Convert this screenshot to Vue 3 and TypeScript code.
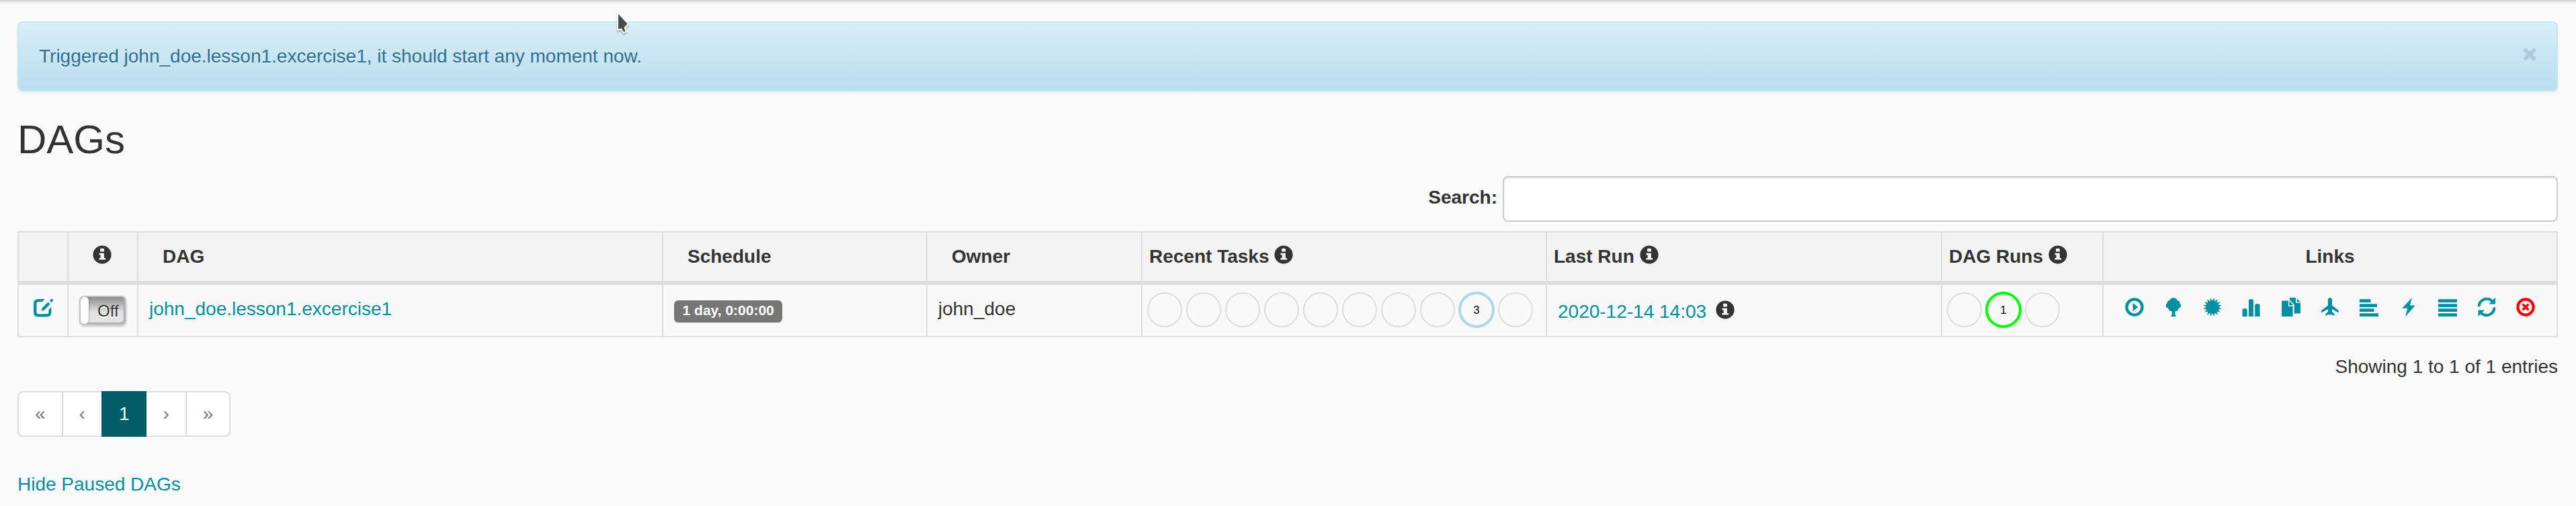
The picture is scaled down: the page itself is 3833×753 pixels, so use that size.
<script setup lang="ts">
interface LinkIcon {
  name: string
  d: string
  danger?: boolean
}

const recentTasks: { count: string; cls: string }[] = Array.from({ length: 10 }, (_, i) =>
  i === 8 ? { count: '3', cls: 'scheduled' } : { count: '', cls: '' }
)
const dagRuns: { count: string; cls: string }[] = [
  { count: '', cls: '' },
  { count: '1', cls: 'running' },
  { count: '', cls: '' }
]

const infoPath =
  'M14 .4a13.6 13.6 0 1 0 0 27.2a13.6 13.6 0 1 0 0-27.2zM11.7 4.7h4.6q.6 0 .6.6v3.6q0 .6-.6.6h-4.6q-.6 0-.6-.6V5.300q0-.6.6-.6zM9.900 11.700h6.400q.6 0 .6.6v6.800h1.700q.6 0 .6.6v1.300q0 .6-.6.6H9.900q-.6 0-.6-.6v-1.300q0-.6.6-.6h1.700v-4.900H9.900q-.6 0-.6-.6v-1.300q0-.6.6-.6z'

function burst(): string {
  const pts: string[] = []
  for (let i = 0; i < 32; i++) {
    const r = i % 2 === 0 ? 14 : 9.2
    const a = (Math.PI * (i + 1)) / 16
    pts.push(`${(14 + r * Math.sin(a)).toFixed(2)} ${(14 - r * Math.cos(a)).toFixed(2)}`)
  }
  return `M${pts.join('L')}z`
}

const linkIcons: LinkIcon[] = [
  { name: 'Trigger', d: 'M14 .3a13.7 13.7 0 1 0 0 27.400a13.700 13.700 0 1 0 0-27.400zM14 4.600a9.400 9.400 0 1 1 0 18.800a9.400 9.400 0 1 1 0-18.800zM11.600 8.800q0-.8.7-.3l6.300 5q.6.500 0 1l-6.300 5q-.7.5-.7-.3z' },
  { name: 'Tree', d: 'M14 .2c2.800 0 5 1.600 5.700 3.900c2.500.2 4 2 3.700 4.200c1.200.8 1.900 2 1.900 3.400c0 2.300-1.600 3.700-3.500 3.900c-.2 2.600-2 4.500-4.400 4.500h-.9v5.600h.6q.5 0 .5.5v1.700H10.600v-1.700q0-.5.500-.5h.6v-5.600h-1c-2.400 0-4.200-1.900-4.400-4.500c-2-.2-3.600-1.700-3.600-3.900c0-1.400.8-2.700 2-3.400c-.3-2.200 1.200-4 3.600-4.200C9 1.800 11.200.2 14 .2z' },
  { name: 'Graph', d: burst() },
  { name: 'Duration', d: 'M.6 27.900v-9.600q0-2 2-2h3.200q2 0 2 2v9.600zM10 27.900V4.200q0-2 2-2h3q2 0 2 2v23.700zM19.200 27.900V11.200q0-2 2-2h3.400q2 0 2 2v16.700z' },
  { name: 'Tries', d: 'M.1 5.400q0-1 1-1H10v8.700h6.600v13.800q0 1-1 1H1.100q-1 0-1-1zM11.400 4.700l5.200 5.500v1.300h-5.200zM11.900 0H21v7.800h7.500v14.800q0 1-1 1h-8.800V10.300L11.900 3.300zM22.800 1.300l5.100 5.200h-5.100z' },
  { name: 'Landing', d: 'M14 .1c2 0 3.100 1.700 3.100 3.900v7.400l9 7.100q.8.600.8 1.500v1.500q0 1-.9.500L17.100 17v4.100l3 2.700q.5.4.5 1.100v1.500q0 .8-.7.400L15.500 24.400Q14.900 26 14 26.100Q13.100 26 12.500 24.400L8.100 26.800q-.7.400-.7-.4v-1.500q0-.7.500-1.100l3-2.700V17L2 22q-.9.500-.9-.5V20q0-.9.800-1.500l9-7.100V4C10.900 1.800 12 .1 14 .1z' },
  { name: 'Gantt', d: 'M.8 2.200h15q.8 0 .8.800v3.200q0 .8-.8.800h-15q-.8 0-.8-.8V3q0-.8.800-.8zM.8 9.300h24.400q.8 0 .8.800v3.200q0 .8-.8.800H.8q-.8 0-.8-.8v-3.200q0-.8.800-.8zM.8 16.300h20q.8 0 .8.800v3.200q0 .8-.8.800H.8q-.8 0-.8-.8v-3.200q0-.8.800-.8zM.8 23.300h26.600q.8 0 .8.800v3q0 .8-.8.800H.8q-.8 0-.8-.8v-3q0-.8.800-.8z' },
  { name: 'Code', d: 'M18.400.5q.5-.6.300.2L15.900 11.600h7q.9 0 .3.700L9.700 27.400q-.6.500-.4-.2l3-11.500H5.200q-.8 0-.3-.700z' },
  { name: 'Logs', d: 'M.8 2.200h26.600q.8 0 .8.800v3.200q0 .8-.8.800H.8Q0 7 0 6.200V3q0-.8.800-.8zM.8 9.300h26.600q.8 0 .8.800v3.200q0 .8-.8.800H.8q-.8 0-.8-.8v-3.200q0-.8.800-.8zM.8 16.300h26.600q.8 0 .8.800v3.200q0 .8-.8.800H.8q-.8 0-.8-.8v-3.200q0-.8.800-.8zM.8 23.300h26.600q.8 0 .8.800v3q0 .8-.8.800H.8q-.8 0-.8-.8v-3q0-.8.800-.8z' },
  { name: 'Refresh', d: 'M.6 13.300A13.500 13.500 0 0 1 23.300 3.400L26.500.3q.6-.5.600.3v8q0 .8-.8.800h-8.200q-.8 0-.3-.6l2.700-2.600A9.800 9.800 0 0 0 4.400 13.300zM27.400 14.500A13.500 13.500 0 0 1 4.800 24.500L2.100 27.300q-.6.500-.6-.3V19.200q0-.8.800-.8h7.900q.8 0 .3.600L7.600 21.800A9.800 9.800 0 0 0 23.600 14.500z' },
  { name: 'Delete', danger: true, d: 'M14 .3a13.700 13.700 0 1 0 0 27.400a13.700 13.700 0 1 0 0-27.400zM14 4.400a9.600 9.600 0 1 1 0 19.200a9.600 9.600 0 1 1 0-19.200zM10.700 8.500L14 11.400l3.300-2.900 2.200 2.200L16.600 14l2.900 3.300-2.200 2.200L14 16.600l-3.300 2.900-2.200-2.200L11.400 14l-2.900-3.300z' }
]
const pages: string[] = ['«', '‹', '1', '›', '»']
</script>

<template>
  <div class="page">
    <div class="alert">
      <span>Triggered john_doe.lesson1.excercise1, it should start any moment now.</span>
      <svg class="close" viewBox="0 0 20 20"><path d="M4.200.2L10 6.200 15.800.2l4 4L13.800 10l6 5.800-4 4L10 13.800l-5.800 6-4-4L6.200 10 .2 4.200z" /></svg>
    </div>

    <h2>DAGs</h2>

    <div class="search">
      <label for="dag-search">Search:</label>
      <input id="dag-search" type="text" />
    </div>

    <div class="table">
      <div class="row head">
        <div class="cell"></div>
        <div class="cell center"><svg class="icon" viewBox="0 0 28 28"><path fill-rule="evenodd" :d="infoPath" /></svg></div>
        <div class="cell sortable">DAG</div>
        <div class="cell sortable">Schedule</div>
        <div class="cell sortable">Owner</div>
        <div class="cell">Recent Tasks<svg class="icon after" viewBox="0 0 28 28"><path fill-rule="evenodd" :d="infoPath" /></svg></div>
        <div class="cell">Last Run<svg class="icon after" viewBox="0 0 28 28"><path fill-rule="evenodd" :d="infoPath" /></svg></div>
        <div class="cell">DAG Runs<svg class="icon after" viewBox="0 0 28 28"><path fill-rule="evenodd" :d="infoPath" /></svg></div>
        <div class="cell center">Links</div>
      </div>
      <div class="row body">
        <div class="cell edit">
          <svg class="icon teal" viewBox="0 0 30 28">
            <path d="M16.500.9L13 4.900H7.800Q4.400 4.900 4.400 8.300V19.900Q4.400 23.300 7.800 23.300H19Q22.400 23.300 22.400 19.900V17L26.400 13V20.500Q26.400 27.500 19.400 27.500H7Q0 27.500 0 20.500V7.900Q0 .9 7 .9z" />
            <path d="M21.500 5.400l3.200 3.200-8.600 8.600-4.600 1.600 1.500-4.900zM26.300.7q.6-.6 1.200 0l1.500 1.500q.6.600 0 1.200l-2.400 2.500-2.700-2.700z" />
          </svg>
        </div>
        <div class="cell toggle-cell">
          <div class="toggle"><span class="knob"></span><span class="off">Off</span></div>
        </div>
        <div class="cell"><a>john_doe.lesson1.excercise1</a></div>
        <div class="cell"><span class="badge">1 day, 0:00:00</span></div>
        <div class="cell">john_doe</div>
        <div class="cell states">
          <span v-for="(s, i) in recentTasks" :key="i" class="state" :class="s.cls">{{ s.count }}</span>
        </div>
        <div class="cell lastrun"><a>2020-12-14 14:03</a><svg class="icon" viewBox="0 0 28 28"><path fill-rule="evenodd" :d="infoPath" /></svg></div>
        <div class="cell states">
          <span v-for="(s, i) in dagRuns" :key="i" class="state" :class="s.cls">{{ s.count }}</span>
        </div>
        <div class="cell links">
          <svg v-for="l in linkIcons" :key="l.name" class="icon" :class="l.danger ? 'red' : 'teal'" viewBox="0 0 28 28">
            <path fill-rule="evenodd" :d="l.d" />
          </svg>
        </div>
      </div>
    </div>

    <div class="info">Showing 1 to 1 of 1 entries</div>

    <div class="pagination">
      <span v-for="p in pages" :key="p" class="pg" :class="{ active: p === '1' }">{{ p }}</span>
    </div>

    <div class="foot"><a>Hide Paused DAGs</a></div>

    <svg class="cursor" viewBox="0 0 24 36">
      <path d="M3 2v26.500l5.300-1.200 3.600 5.700 3.600-2-1.800-6 5.300-5.400z" />
    </svg>
  </div>
</template>

<style>
html,
body {
  margin: 0;
  background: #fafafa;
}
</style>

<style scoped>
.page {
  box-sizing: border-box;
  width: 3833px;
  height: 753px;
  padding: 32px 27px 0 26px;
  overflow: hidden;
  position: relative;
  background: linear-gradient(#cfcfcf 0, #dedede 2px, #f3f3f3 4px, #fafafa 7px);
  color: #333;
  font: 28px/40px "Liberation Sans", Arial, sans-serif;
}
.page * {
  box-sizing: border-box;
}
.alert {
  display: flex;
  justify-content: space-between;
  height: 104px;
  padding: 30px;
  border: 2px solid #bce8f1;
  border-radius: 8px;
  background: linear-gradient(#d9edf7, #b9def0);
  box-shadow: inset 0 2px 0 rgba(255, 255, 255, 0.25), 0 2px 4px rgba(0, 0, 0, 0.05);
  color: #31708f;
  text-shadow: 0 2px 0 rgba(255, 255, 255, 0.2);
}
.close {
  width: 20px;
  height: 20px;
  margin: 7px 0 0;
  fill: #abcbdc;
}
h2 {
  margin: 39px 0 0;
  height: 66px;
  font-size: 60px;
  line-height: 66px;
  font-weight: 400;
}
.search {
  display: flex;
  justify-content: flex-end;
  margin-top: 21px;
  font-weight: 700;
}
.search label {
  margin: 12px 8px 0 0;
}
.search input {
  width: 1570px;
  height: 68px;
  border: 2px solid #ccc;
  border-radius: 8px;
  background: #fff;
  box-shadow: inset 0 2px 2px rgba(0, 0, 0, 0.075);
}
.table {
  margin-top: 14px;
  border: 2px solid #ddd;
  border-left: 0;
}
.row {
  display: grid;
  grid-template-columns: 74px 104px 781px 393px 320px 602px 588px 240px 676px;
}
.head {
  height: 78px;
  border-bottom: 6px solid #ddd;
  background: #f3f3f3;
  font-weight: 700;
}
.body {
  height: 76px;
  background: #f9f9f9;
}
.cell {
  display: flex;
  align-items: flex-start;
  padding: 16px 10px 0;
  border-left: 2px solid #ddd;
  white-space: nowrap;
}
.body .cell {
  padding: 16px 16px 0;
}
.head .sortable {
  padding-left: 36px;
}
.center {
  justify-content: center;
}
.center:nth-child(2) {
  padding-right: 12px;
}
.icon {
  flex: none;
  width: 28px;
  height: 28px;
  fill: #333;
}
.head .icon {
  margin-top: 3px;
}
.icon.after {
  margin-left: 8px;
}
.icon.teal {
  fill: #0090a2;
}
.icon.red {
  fill: #f00;
}
a {
  color: #0090a2;
}
.body .edit {
  padding: 20px 0 0 22px;
}
.edit .icon {
  width: 30px;
}
.body .toggle-cell {
  padding: 16px 0 0 16px;
}
.toggle {
  display: flex;
  width: 70px;
  height: 44px;
  border: 2px solid #c4c4c4;
  border-radius: 7px;
  overflow: hidden;
  background: linear-gradient(#8b8b8b, #e2e2e2 55%, #e6e6e6);
  box-shadow: inset -2px -2px 2px #aaa, 0 2px 3px rgba(0, 0, 0, 0.2);
}
.knob {
  width: 12px;
  height: 40px;
  border-radius: 5px;
  background: #fff;
  box-shadow: 1px 0 2px rgba(0, 0, 0, 0.25);
}
.off {
  margin: 4px 0 0 13px;
  font-size: 24px;
  line-height: 34px;
  text-shadow: 0 2px 0 #fff;
}
.badge {
  height: 33px;
  margin-top: 7px;
  padding: 0 12.6px;
  border-radius: 6px;
  background: #777;
  color: #fff;
  font-size: 21px;
  font-weight: 700;
  line-height: 30px;
}
.body .states {
  gap: 6px;
  padding: 11px 0 0 7px;
}
.state {
  flex: none;
  width: 52px;
  height: 52px;
  border: 2px solid #ddd;
  border-radius: 50%;
  color: #000;
  font-size: 16px;
  line-height: 48px;
  text-align: center;
}
.state.scheduled,
.state.running {
  width: 54px;
  height: 54px;
  margin: -1px;
  border: 4px solid #add8e6;
  line-height: 47px;
}
.state.running {
  border-color: #0f0;
}
.body .lastrun {
  padding-top: 20px;
}
.lastrun .icon {
  margin: 3px 0 0 14px;
}
.body .links {
  justify-content: center;
  gap: 30.3px;
  padding: 19px 0 0;
}
.info {
  margin-top: 24px;
  text-align: right;
}
.pagination {
  display: flex;
  margin-top: 16px;
}
.pg {
  height: 68px;
  margin-left: -2px;
  padding: 12px 24px;
  border: 2px solid #ddd;
  background: #fff;
  color: #777;
}
.pg:first-child {
  margin-left: 0;
  border-radius: 8px 0 0 8px;
}
.pg:last-child {
  border-radius: 0 8px 8px 0;
}
.pg.active {
  position: relative;
  border-color: #005c66;
  background: #005c66;
  color: #fff;
}
.foot {
  margin-top: 51px;
}
.cursor {
  position: absolute;
  left: 916px;
  top: 16px;
  width: 24px;
  height: 36px;
  fill: #4a4a4a;
  stroke: #fff;
  stroke-width: 2px;
  filter: drop-shadow(0 2px 1px rgba(0, 0, 0, 0.3));
}
</style>
